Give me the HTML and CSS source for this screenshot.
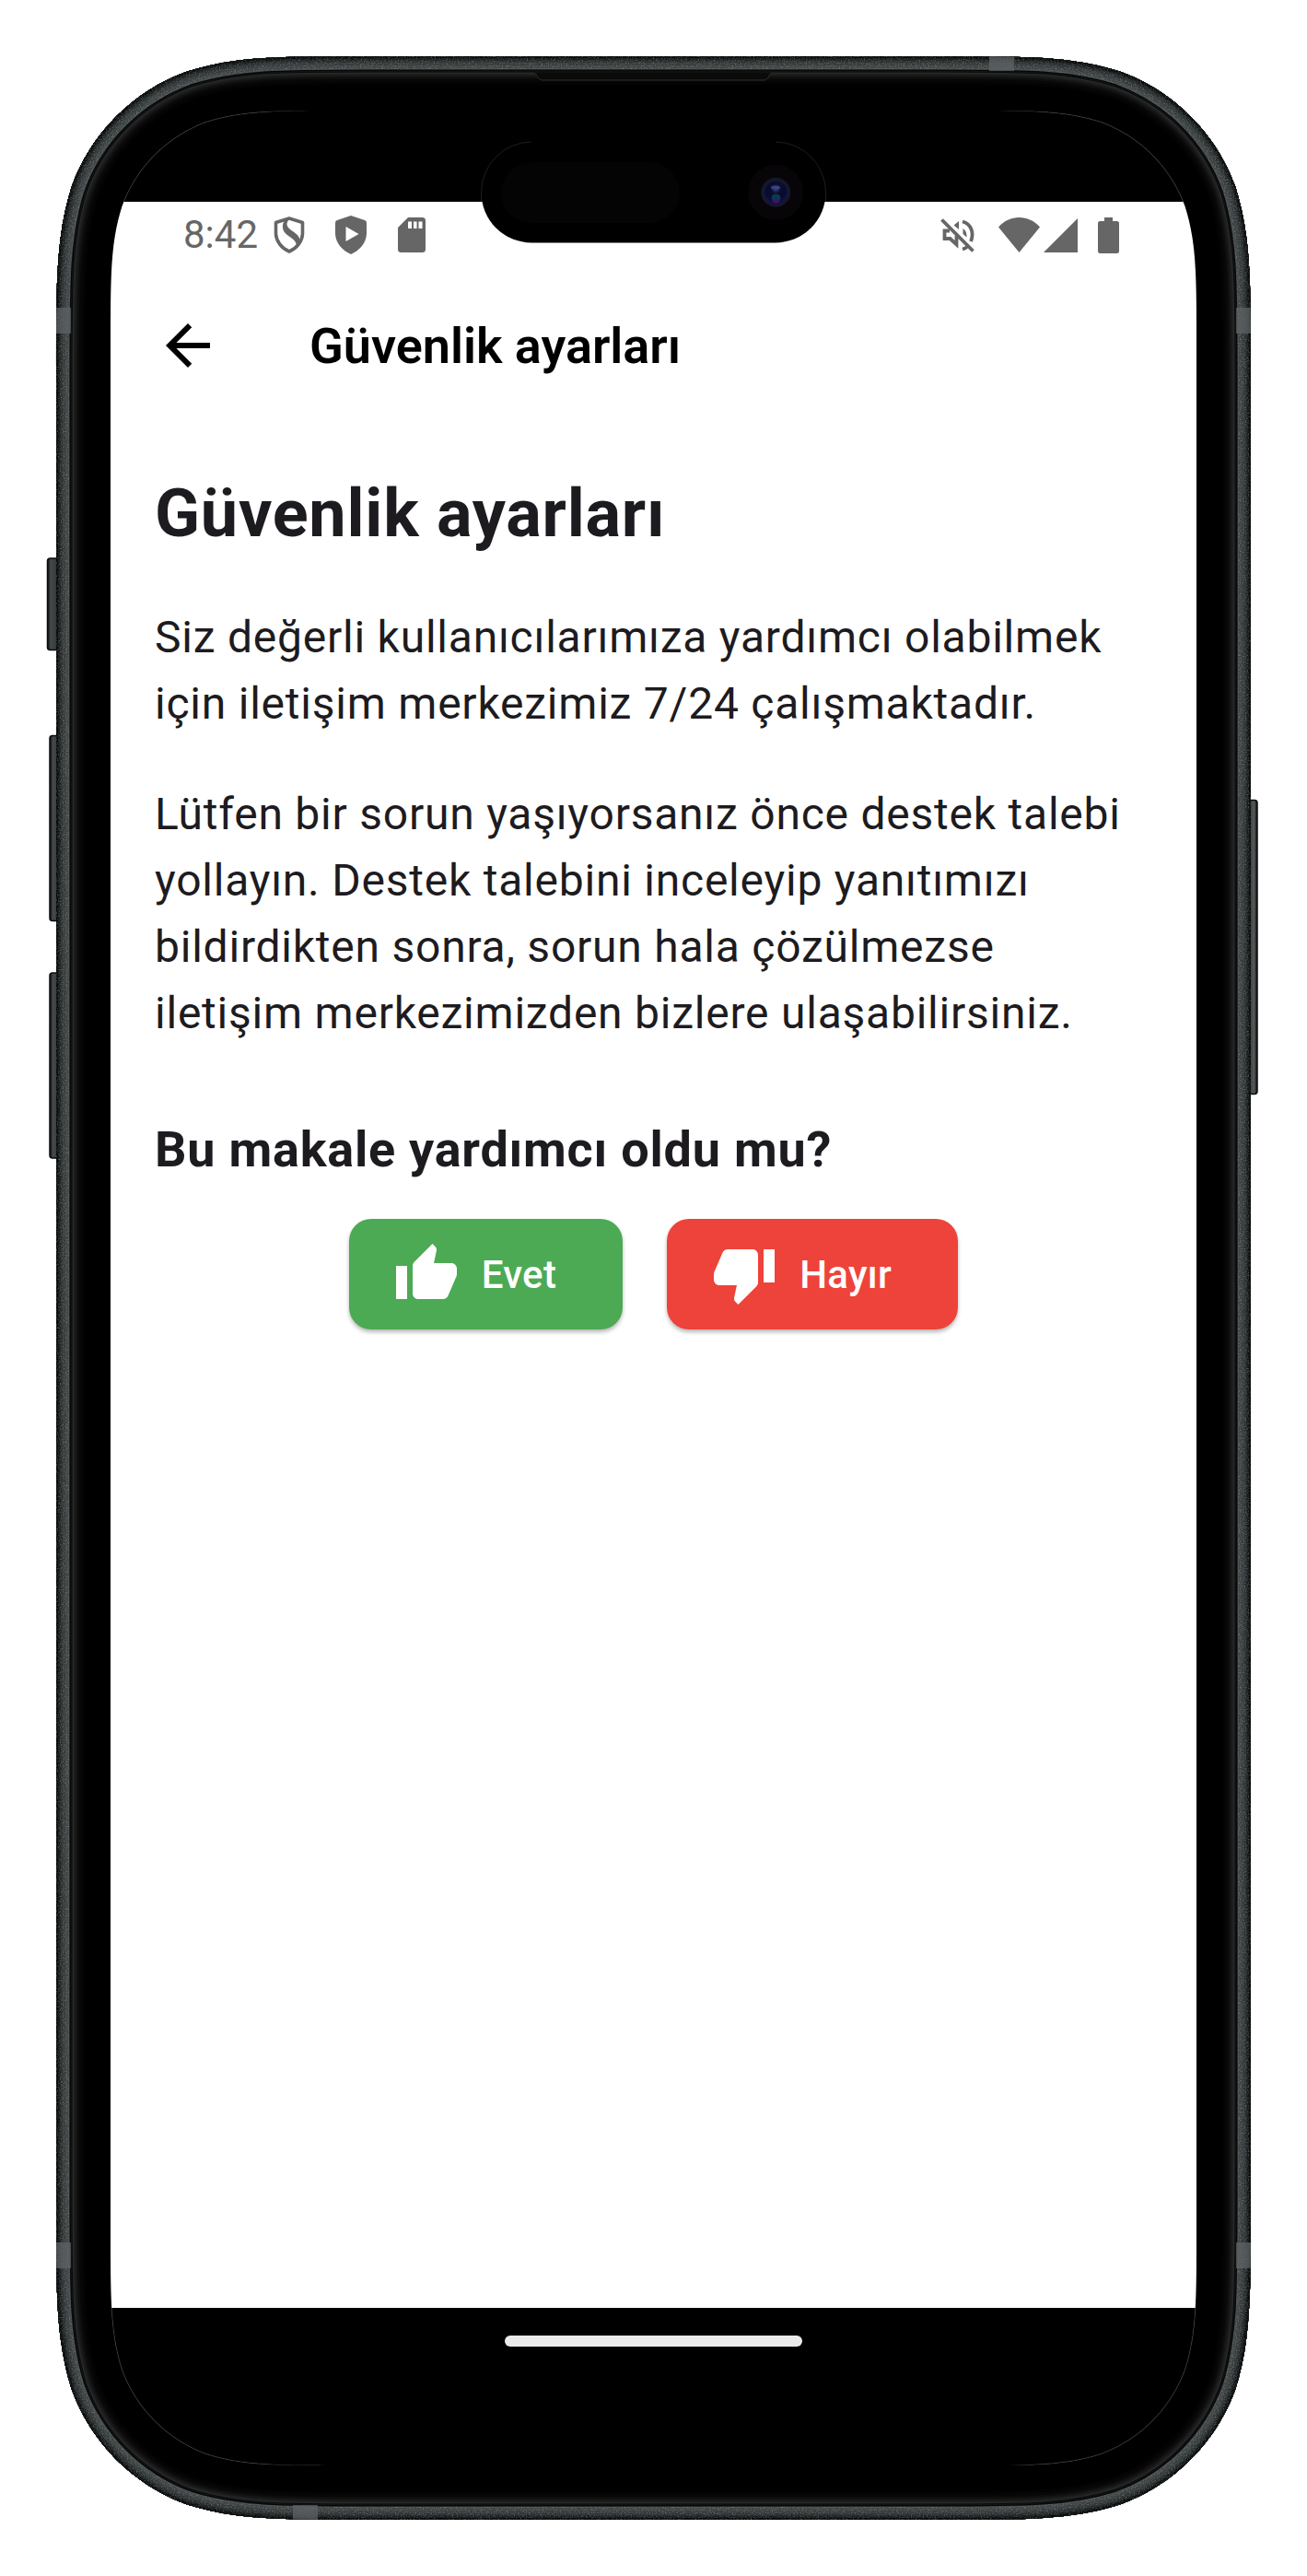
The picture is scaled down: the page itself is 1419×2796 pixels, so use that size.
FILE: index.html
```html
<!DOCTYPE html>
<html lang="tr">
<head>
<meta charset="utf-8">
<title>Güvenlik ayarları</title>
<link rel="stylesheet" href="styles.css">
</head>
<body>
<div class="phone">
  <svg class="frame" viewBox="0 0 1419 2796" aria-hidden="true">
    <defs>
      <path id="body" d="M342.42 0H954.58c98.6 0 147.9 0 200.97 16.78c57.94 21.09 103.58 66.73 124.67 124.67c16.78 53.07 16.78 102.37 16.78 200.97V2331.58c0 98.6 0 147.9-16.78 200.97c-21.09 57.94-66.73 103.58-124.67 124.67c-53.07 16.78-102.37 16.78-200.97 16.78H342.42c-98.6 0-147.9 0-200.97-16.78c-57.94-21.09-103.58-66.73-124.67-124.67c-16.78-53.07-16.78-102.37-16.78-200.97V342.42c0-98.6 0-147.9 16.78-200.97c21.09-57.94 66.73-103.58 124.67-124.67c53.07-16.78 102.37-16.78 200.97-16.78z"/>
      <clipPath id="bodyClip"><use href="#body"/></clipPath>
      <filter id="grain" x="0" y="0" width="100%" height="100%">
        <feTurbulence type="fractalNoise" baseFrequency="0.7" numOctaves="2" seed="4"/>
        <feColorMatrix values="0 0 0 0 .75  0 0 0 0 .8  0 0 0 0 .8  3 0 0 0 -1.4"/>
        <feComposite in2="SourceGraphic" operator="in"/>
      </filter>
      <linearGradient id="key" x1="0" x2="1" y1="0" y2="0">
        <stop offset="0" stop-color="#0b0d0d"/><stop offset=".25" stop-color="#454a4b"/><stop offset=".7" stop-color="#34393a"/><stop offset="1" stop-color="#141717"/>
      </linearGradient>
      <linearGradient id="keyRight" x1="1" x2="0" y1="0" y2="0">
        <stop offset="0" stop-color="#0b0d0d"/><stop offset=".25" stop-color="#55595a"/><stop offset=".7" stop-color="#303536"/><stop offset="1" stop-color="#141717"/>
      </linearGradient>
      <radialGradient id="lens" cx=".5" cy=".35" r=".6">
        <stop offset="0" stop-color="#39428c"/><stop offset=".35" stop-color="#0c0e2c"/><stop offset=".75" stop-color="#070a30"/><stop offset="1" stop-color="#0c1050"/>
      </radialGradient>
    </defs>
    <g fill="url(#key)" stroke="#0b0d0d" stroke-width="1.5">
      <rect x="51.5" y="606" width="14" height="99.500" rx="3"/>
      <rect x="54" y="798.500" width="14" height="201" rx="3"/>
      <rect x="54" y="1056" width="14" height="201" rx="3"/>
      <rect x="1351" y="868.5" width="14" height="319" rx="3" fill="url(#keyRight)"/>
    </g>
    <g transform="translate(61 61)">
      <use href="#body" fill="#000"/>
      <g clip-path="url(#bodyClip)">
        <g fill="none">
          <use href="#body" stroke="#030303" stroke-width="62"/>
          <use href="#body" stroke="#070707" stroke-width="56"/>
          <use href="#body" stroke="#0d0d0d" stroke-width="50"/>
          <use href="#body" stroke="#151515" stroke-width="46"/>
          <use href="#body" stroke="#1e1e1e" stroke-width="42"/>
          <use href="#body" stroke="#272828" stroke-width="38"/>
          <use href="#body" stroke="#090b0b" stroke-width="35"/>
          <use href="#body" stroke="#171919" stroke-width="33"/>
          <use href="#body" stroke="#050606" stroke-width="31.5"/>
          <use href="#body" stroke="#484d4e" stroke-width="29"/>
          <use href="#body" stroke="#3f4445" stroke-width="26"/>
          <use href="#body" stroke="#363b3c" stroke-width="20"/>
          <use href="#body" stroke="#2b3031" stroke-width="14"/>
          <use href="#body" stroke="#212526" stroke-width="10"/>
          <use href="#body" stroke="#15191a" stroke-width="7"/>
          <use href="#body" stroke="#0a0c0c" stroke-width="4"/>
          <use href="#body" stroke="#fff" stroke-width="28" filter="url(#grain)" opacity=".25"/>
        </g>
        <g fill="#5d6364" opacity=".75">
          <rect x="0" y="273" width="16" height="28"/><rect x="1281" y="273" width="16" height="28"/>
          <rect x="0" y="2373" width="16" height="28"/><rect x="1281" y="2373" width="16" height="28"/>
          <rect x="1013" y="0" width="27" height="16"/><rect x="257" y="2658" width="27" height="16"/>
        </g>
        <path d="M519 17.5h258l-5 7q-1 2-4 2H528q-3 0-4-2z" fill="#0a0a0a"/>
        <path d="M519 18.5q2 0 3 3t5 4.500H769q4-1 5-4.500t3-3" fill="none" stroke="#2c2c2c"/>
      </g>
    </g>
  </svg>

  <div class="screen">
    <div class="top-inset"></div>
    <header class="status-bar">
      <span class="time">8:42</span>
      <svg class="ic-swirl" viewBox="0 0 34 42"><path d="M17 3L31.500 7.500V19C31.500 28 25 35.500 17 39C9 35.500 2.500 28 2.500 19V7.500Z" fill="none" stroke="#666" stroke-width="3.600" stroke-linejoin="round"/><path d="M12.500 4.500C8 11 9.500 17 15.500 21.500C22 26 25.500 28.500 24.500 33.500L28.500 28C29 23 25 20 20 16.500C13 12 13.500 8 17 4Z" fill="#666"/></svg>
      <svg class="ic-play" viewBox="0 0 34 42"><path d="M17 0L32 5Q34 5.700 34 8V19C34 30 26 38 17 42C8 38 0 30 0 19V8Q0 5.700 2 5ZM11.500 12V28L25.500 20Z" fill="#666" fill-rule="evenodd"/></svg>
      <svg class="ic-sd" viewBox="0 0 30 38"><path d="M11 0H26.500Q30 0 30 3.500V34.500Q30 38 26.500 38H3.500Q0 38 0 34.500V11ZM11 4.500V12H15V4.500ZM17 4.500V12H20.500V4.500ZM22.500 4.500V12H26.500V4.500Z" fill="#666" fill-rule="evenodd"/></svg>
      <span class="spacer"></span>
      <svg class="ic-mute" viewBox="0 0 37 37"><g fill="none" stroke="#666" stroke-width="3.800"><path d="M1.500 1.500L35.500 35.500"/><path d="M10 13.500H4.500V22H10.500L17.500 28.500V19"/><path d="M24 3.500C33 6 37 15 33 25"/><path d="M24 33.500Q27.500 32.500 29.500 30.500"/></g><path d="M20 3V12L14.500 7.500ZM24.500 11Q29 14 28.500 20.500L24.500 17Z" fill="#666"/></svg>
      <svg class="ic-wifi" viewBox="0 0 45 38"><path d="M0 10.500C12-3.500 33-3.500 45 10.500L22.500 38Z" fill="#666"/></svg>
      <svg class="ic-signal" viewBox="0 0 37 37"><path d="M37 0V37H0Z" fill="#666"/></svg>
      <svg class="ic-battery" viewBox="0 0 23 39"><path d="M7 0H16V4H20.500Q23 4 23 6.500V36.500Q23 39 20.500 39H2.500Q0 39 0 36.500V6.500Q0 4 2.500 4H7Z" fill="#666"/></svg>
    </header>
    <nav class="app-bar">
      <svg class="back" viewBox="0 0 24 24"><path d="M20 11H7.830l5.590-5.590L12 4l-8 8 8 8 1.410-1.410L7.830 13H20v-2z"/></svg>
      <span class="app-title">Güvenlik ayarları</span>
    </nav>
    <main class="article">
      <h1>Güvenlik ayarları</h1>
      <p>Siz değerli kullanıcılarımıza yardımcı olabilmek<br>için iletişim merkezimiz 7/24 çalışmaktadır.</p>
      <p>Lütfen bir sorun yaşıyorsanız önce destek talebi<br>yollayın. Destek talebini inceleyip yanıtımızı<br>bildirdikten sonra, sorun hala çözülmezse<br>iletişim merkezimizden bizlere ulaşabilirsiniz.</p>
      <h2>Bu makale yardımcı oldu mu?</h2>
      <div class="actions">
        <button class="btn yes" type="button"><svg viewBox="0 0 24 24"><path d="M1 21h4V9H1v12zm22-11c0-1.100-.9-2-2-2h-6.310l.95-4.570.03-.32c0-.41-.17-.79-.44-1.060L14.170 1 7.590 7.590C7.220 7.950 7 8.450 7 9v10c0 1.100.9 2 2 2h9c.83 0 1.540-.5 1.840-1.220l3.020-7.050c.09-.23.14-.47.14-.73v-2z"/></svg>Evet</button>
        <button class="btn no" type="button"><svg viewBox="0 0 24 24"><path d="M15 3H6c-.83 0-1.540.5-1.840 1.220l-3.020 7.050c-.09.23-.14.47-.14.73v2c0 1.100.9 2 2 2h6.310l-.95 4.570-.03.32c0 .41.17.79.44 1.060L9.830 23l6.590-6.590c.36-.36.58-.86.58-1.410V5c0-1.100-.9-2-2-2zm4 0v12h4V3h-4z"/></svg>Hayır</button>
      </div>
    </main>
    <footer class="nav-inset"><span class="home-pill"></span></footer>
  </div>

  <svg class="glass" viewBox="0 0 1419 2796" aria-hidden="true">
    <defs>
      <linearGradient id="edgeFade" gradientUnits="userSpaceOnUse" x1="0" y1="0" x2="1179" y2="0">
        <stop offset="0" stop-color="#333"/><stop offset=".14" stop-color="#333"/><stop offset=".17" stop-color="#000"/>
        <stop offset=".83" stop-color="#000"/><stop offset=".86" stop-color="#333"/><stop offset="1" stop-color="#333"/>
      </linearGradient>
      <clipPath id="insets"><path d="M0 0H1179V99H0ZM0 2385.500H1179V2556H0Z"/></clipPath>
    </defs>
    <g transform="translate(120 120)" clip-path="url(#insets)">
      <path d="M252.23 0H926.77c72.63 0 108.94 0 148.03 12.36c42.68 15.53 76.3 49.15 91.84 91.84c12.36 39.09 12.36 75.4 12.36 148.03V2303.77c0 72.63 0 108.94-12.36 148.03c-15.54 42.69-49.16 76.31-91.84 91.84c-39.09 12.36-75.4 12.36-148.03 12.36H252.23c-72.63 0-108.94 0-148.03-12.36c-42.68-15.53-76.3-49.15-91.84-91.84c-12.36-39.09-12.36-75.4-12.36-148.03V252.23c0-72.63 0-108.94 12.36-148.03c15.54-42.69 49.16-76.31 91.84-91.84c39.09-12.36 75.4-12.36 148.03-12.36z" fill="none" stroke="url(#edgeFade)" stroke-width=".7"/>
    </g>
    <rect x="522.500" y="154" width="374" height="109.500" rx="54.750" fill="#000"/>
    <path d="M522.500 219V209A55 55 0 0 1 577 154M842 154A55 55 0 0 1 896.500 209V219" fill="none" stroke="#333" stroke-width=".6"/>
    <rect x="544" y="176" width="194" height="66" rx="33" fill="#040404"/>
    <circle cx="842.300" cy="208.700" r="30" fill="#070508"/>
    <circle cx="842.300" cy="208.700" r="16" fill="#15172a"/>
    <circle cx="842.300" cy="208.700" r="12" fill="url(#lens)"/>
    <ellipse cx="842.500" cy="214.500" rx="5" ry="4" fill="#0d3a48"/>
    <ellipse cx="842.500" cy="218.500" rx="4" ry="1.800" fill="#41126b"/>
    <ellipse cx="842" cy="203.500" rx="5" ry="2" fill="#3a4284"/>
  </svg>
</div>
</body>
</html>
```
FILE: styles.css
```css
* { box-sizing: border-box; }

body {
  margin: 0;
  background: #fff;
  font-family: Roboto, "Noto Sans", sans-serif;
}

.phone {
  position: relative;
  width: 1419px;
  height: 2796px;
  padding: 120px;
}

.frame,
.glass {
  position: absolute;
  inset: 0;
  width: 1419px;
  height: 2796px;
}

.glass { pointer-events: none; }

.screen {
  position: relative;
  display: flex;
  flex-direction: column;
  width: 1179px;
  height: 2556px;
  background: #fff;
  clip-path: path("M252.23 0H926.77c72.63 0 108.94 0 148.03 12.36c42.68 15.53 76.3 49.15 91.84 91.84c12.36 39.09 12.36 75.4 12.36 148.03V2303.77c0 72.63 0 108.94-12.36 148.03c-15.54 42.69-49.16 76.31-91.84 91.84c-39.09 12.36-75.4 12.36-148.03 12.36H252.23c-72.63 0-108.94 0-148.03-12.36c-42.68-15.53-76.3-49.15-91.84-91.84c-12.36-39.09-12.36-75.4-12.36-148.03V252.23c0-72.63 0-108.94 12.36-148.03c15.54-42.69 49.16-76.31 91.84-91.84c39.09-12.36 75.4-12.36 148.03-12.36z");
}

.top-inset {
  height: 99px;
  background: #000;
}

.status-bar {
  display: flex;
  align-items: center;
  height: 72px;
  padding: 0 84px 0 79px;
  color: #666;
}

.time {
  width: 98px;
  font-size: 42px;
  line-height: 72px;
}

.spacer { flex: 1; }
.ic-swirl { width: 34px; height: 42px; }
.ic-play { width: 34px; height: 42px; margin-left: 33px; }
.ic-sd { width: 30px; height: 38px; margin-left: 34px; }
.ic-mute { width: 37px; height: 37px; margin-right: 26px; }
.ic-wifi { width: 45px; height: 38px; margin-right: 4px; }
.ic-signal { width: 37px; height: 37px; margin-right: 22px; }
.ic-battery { width: 23px; height: 39px; }

.app-bar {
  display: flex;
  align-items: center;
  height: 168px;
  padding-left: 48px;
  color: #000;
}

.back {
  width: 72px;
  height: 72px;
  margin-right: 96px;
}

.app-title {
  padding-top: 2px;
  font-size: 54px;
  font-weight: 600;
  line-height: 72px;
}

.article {
  flex: 1;
  padding: 50px 0 0 48px;
  color: #1d1b20;
  letter-spacing: .77px;
}

h1,
h2,
p { margin: 0; }

h1 {
  font-size: 72px;
  font-weight: 700;
  line-height: 98px;
}

p {
  margin-top: 49px;
  font-size: 48px;
  line-height: 72px;
}

p + p { margin-top: 48px; }

h2 {
  margin-top: 76px;
  font-size: 54px;
  font-weight: 700;
  line-height: 72px;
}

.actions {
  display: flex;
  justify-content: center;
  gap: 48px;
  margin: 39px 48px 0 0;
}

.btn {
  display: flex;
  align-items: center;
  gap: 24px;
  height: 120px;
  padding: 0 72px 0 48px;
  border: 0;
  border-radius: 24px;
  box-shadow: 0 3px 4px rgba(0, 0, 0, .28);
  color: #fff;
  font-family: inherit;
  font-size: 42px;
  font-weight: 500;
  letter-spacing: .3px;
}

.btn svg {
  width: 72px;
  height: 72px;
  fill: currentColor;
}

.yes { background: #4caa54; }
.no { background: #ee433a; }

.nav-inset {
  display: flex;
  justify-content: center;
  height: 171px;
  padding-top: 30px;
  background: #000;
}

.home-pill {
  width: 323px;
  height: 12px;
  border-radius: 6px;
  background: #ebebeb;
}
```
